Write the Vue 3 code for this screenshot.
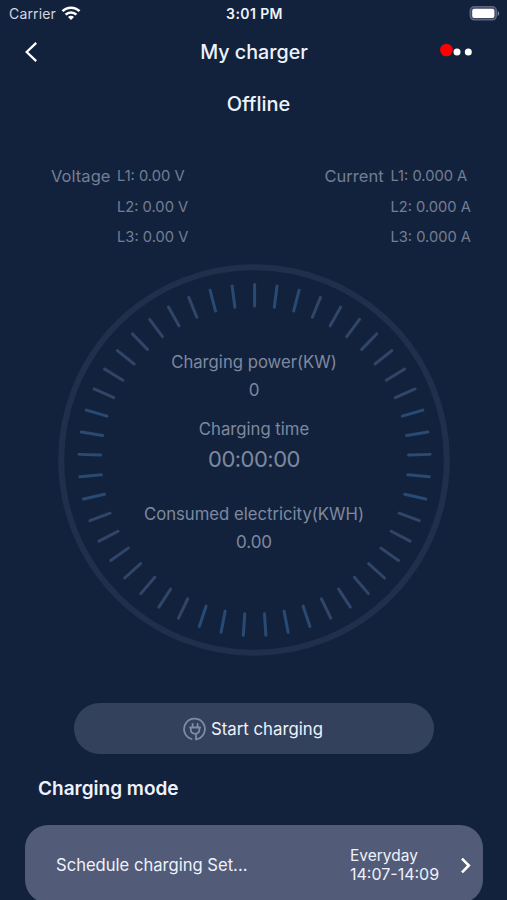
<script setup>
const count = 49
const ticks = Array.from({ length: count }, (_, i) => (i * 360) / count)
const tickColors = ['#294a73', '#304669']
const phases = [
  { name: 'Voltage', cls: 'voltage', rows: ['L1: 0.00 V', 'L2: 0.00 V', 'L3: 0.00 V'] },
  { name: 'Current', cls: 'current', rows: ['L1: 0.000 A', 'L2: 0.000 A', 'L3: 0.000 A'] },
]
const tickColor = (a) => (Math.abs(Math.sin((a * Math.PI) / 90)) < 0.6 ? tickColors[0] : tickColors[1])
</script>

<template>
  <main class="screen">
    <header class="status">
      <div class="carrier">
        <span>Carrier</span>
        <svg width="20" height="15" viewBox="0 0 20 15" fill="none" stroke="#fff" stroke-width="2.6">
          <path d="M1.5 5.2C6.2.5 13.8.5 18.5 5.2" />
          <path d="M4.6 8.6C7.6 5.7 12.4 5.7 15.4 8.6" />
          <path d="M7 10.9C8.8 9.3 11.2 9.3 13 10.9L10 14Z" fill="#fff" stroke="none" />
        </svg>
      </div>
      <span class="clock">3:01 PM</span>
      <svg class="battery" width="31" height="15" viewBox="0 0 31 15">
        <rect x="1.3" y="0.8" width="26" height="13" rx="4" fill="#3c4761" stroke="#5b6580" stroke-width="1.5" />
        <rect x="3.2" y="2.8" width="22.2" height="9.2" rx="2" fill="#fff" />
        <path d="M28.7 5c2 .8 2 4 0 4.9z" fill="#7d8598" />
      </svg>
    </header>

    <nav class="nav">
      <svg class="back" width="14" height="22" viewBox="0 0 14 22" fill="none" stroke="#fff" stroke-width="2.3">
        <path d="M11.2 1.8 1.7 11 11.2 20.2" />
      </svg>
      <h1>My charger</h1>
      <svg class="more" width="34" height="16" viewBox="0 0 34 16">
        <circle cx="6.4" cy="7" r="6.3" fill="#f00" />
        <circle cx="17" cy="9" r="3.5" fill="#fff" />
        <circle cx="28.3" cy="9" r="3.5" fill="#fff" />
      </svg>
    </nav>

    <p class="state">Offline</p>

    <section class="readings">
      <div v-for="p in phases" :key="p.name" class="phase" :class="p.cls">
        <span class="name">{{ p.name }}</span>
        <ul>
          <li v-for="r in p.rows" :key="r">{{ r }}</li>
        </ul>
      </div>
    </section>

    <section class="dial">
      <svg class="face" width="392" height="392" viewBox="-196 -196 392 392">
        <circle r="192.8" fill="none" stroke="#20304c" stroke-width="6" />
        <g transform="translate(0.6 0)">
          <line
            v-for="a in ticks"
            :key="a"
            x1="0"
            x2="0"
            y1="-175.5"
            y2="-154"
            :stroke="tickColor(a)"
            stroke-width="3"
            stroke-linecap="round"
            :transform="`rotate(${a})`"
          />
        </g>
      </svg>
      <div class="metrics">
        <span class="label power">Charging power(KW)</span>
        <span class="value zero">0</span>
        <span class="label time">Charging time</span>
        <span class="value timer">00:00:00</span>
        <span class="label used">Consumed electricity(KWH)</span>
        <span class="value total">0.00</span>
      </div>
    </section>

    <button class="start">
      <svg width="24" height="24" viewBox="0 0 24 24" fill="none" stroke="#7e8ba5" stroke-width="1.8" stroke-linecap="round">
        <path d="M8.6 22A10.4 10.4 0 1 1 13 22.3V17.2" />
        <path d="M9.6 6.8v3.4M14.6 6.8v3.4M7 10.5h10.2M7.8 10.8v1.8c0 2.6 1.9 4.2 4.3 4.2s4.3-1.6 4.3-4.2v-1.8" />
      </svg>
      <span>Start charging</span>
    </button>

    <h2>Charging mode</h2>

    <section class="card">
      <span class="schedule">Schedule charging Set...</span>
      <div class="when">
        <span class="day">Everyday</span>
        <span class="hours">14:07-14:09</span>
      </div>
      <svg class="go" width="11" height="17" viewBox="0 0 11 17" fill="none" stroke="#fff" stroke-width="2.6">
        <path d="M2 1.7 8.8 8.5 2 15.3" />
      </svg>
    </section>
  </main>
</template>

<style>
body {
  margin: 0;
  background: #13223c;
}
</style>

<style scoped>
.screen {
  box-sizing: border-box;
  width: 507px;
  height: 900px;
  overflow: hidden;
  background: #13223c;
  color: #eef2fb;
  font-family: Inter, "Liberation Sans", sans-serif;
  display: flex;
  flex-direction: column;
}
.screen > * { flex: none; }
h1, h2, p, ul { margin: 0; padding: 0; }
li { list-style: none; }
span, li, h1, h2, p { white-space: nowrap; }
svg { display: block; flex: none; }
.status {
  box-sizing: border-box;
  height: 28px;
  display: grid;
  grid-template-columns: 1fr auto 1fr;
  align-items: center;
  padding: 0 7px 2px 9px;
  font-size: 14px;
}
.carrier { display: flex; align-items: center; gap: 5px; color: #d2d7e2; letter-spacing: 0.15px; }
.clock { font-weight: 600; letter-spacing: 0.4px; }
.battery { justify-self: end; }
.nav {
  height: 48px;
  display: grid;
  grid-template-columns: 1fr auto 1fr;
  align-items: center;
  padding: 0 34px 0 25px;
}
h1 { font-size: 19.7px; line-height: 48px; font-weight: 500; padding-left: 10px; }
.more { justify-self: end; margin: -3px -1px 0 0; }
.state { height: 56px; line-height: 56px; text-align: center; font-size: 20px; font-weight: 500; padding-left: 10px; }
.readings {
  height: 132px;
  box-sizing: border-box;
  padding: 28px 36px 0 51px;
  display: flex;
  justify-content: space-between;
  color: #737e94;
}
.phase { display: flex; }
.name { width: 66px; font-size: 16.5px; line-height: 32px; letter-spacing: 0.05px; }
.phase li { height: 30.6px; line-height: 32px; font-size: 14.7px; }
.dial { width: 392px; height: 392px; margin-left: 58px; display: grid; }
.face, .metrics { grid-area: 1 / 1; }
.metrics { display: flex; flex-direction: column; align-items: center; padding-top: 84px; color: #7e899f; }
.metrics span { height: 28px; line-height: 28px; }
.label { font-size: 16.7px; }
.value { font-size: 17px; }
.time { margin-top: 11px; }
.metrics .timer { height: 32px; line-height: 32px; font-size: 22px; letter-spacing: -0.5px; }
.used { margin-top: 25px; }
.start {
  width: 360px;
  height: 51px;
  margin: 47px 0 0 74px;
  padding: 0 2px 0 0;
  border: 0;
  border-radius: 26px;
  background: #33415c;
  color: #eef2fb;
  font: 16.8px Inter, "Liberation Sans", sans-serif;
  display: flex;
  align-items: center;
  justify-content: center;
  gap: 4px;
}
h2 { height: 71px; line-height: 70px; padding-left: 38px; font-size: 19px; font-weight: 600; }
.card {
  box-sizing: border-box;
  width: 458px;
  height: 78px;
  margin-left: 25px;
  padding: 2px 12px 0 31px;
  border-radius: 23px;
  background: #525b78;
  display: flex;
  align-items: center;
}
.schedule { width: 294px; font-size: 16.6px; }
.when { width: 110px; display: flex; flex-direction: column; font-size: 16px; line-height: 18.5px; }
.day { font-size: 15.5px; }
</style>
